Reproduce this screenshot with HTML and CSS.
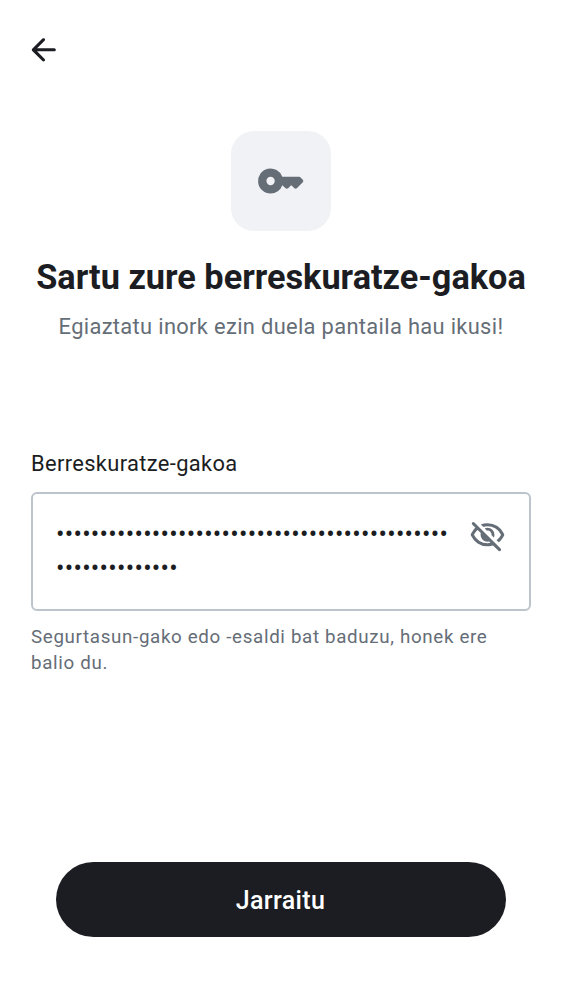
FILE: index.html
```html
<!DOCTYPE html>
<html lang="eu">
<head>
<meta charset="utf-8">
<title>Berreskuratze-gakoa</title>
<link rel="stylesheet" href="styles.css">
</head>
<body>
<main class="screen">
  <header class="topbar">
    <button class="back" aria-label="Atzera">
      <svg viewBox="0 -.2 24 24"><path d="m7.83 13 4.9 4.9a.95.95 0 0 1 .287.7.98.98 0 0 1-.313.7q-.3.275-.7.288a.93.93 0 0 1-.7-.288l-6.6-6.6a.9.9 0 0 1-.212-.325A1.1 1.1 0 0 1 4.426 12q0-.2.063-.375a.9.9 0 0 1 .212-.325l6.6-6.6a.93.93 0 0 1 .688-.275q.412 0 .712.275.3.3.3.713 0 .412-.3.712L7.826 11h11.175q.424 0 .713.287.287.288.287.713t-.287.713a.97.97 0 0 1-.713.287z"/></svg>
    </button>
  </header>
  <section class="intro">
    <div class="tile">
      <svg viewBox="0 0 24 24"><path fill-rule="evenodd" d="M7 14a2 2 0 1 1 0-4 2 2 0 0 1 0 4m0 4a6 6 0 1 1 5.65-8h8.05q.4 0 .7.3l1.05 1.05q.6.65 0 1.3l-2.75 2.75q-.7.6-1.4 0l-1.2-1.2q-.2-.2-.4 0l-1.15 1.15q-.65.6-1.35.15L12.65 14A6 6 0 0 1 7 18"/></svg>
    </div>
    <h1>Sartu zure berreskuratze-gakoa</h1>
    <p>Egiaztatu inork ezin duela pantaila hau ikusi!</p>
  </section>
  <section class="field">
    <label>Berreskuratze-gakoa</label>
    <div class="input">
      <div class="mask">•••••••••••••••••••••••••••••••••••••••••••••<br>••••••••••••••</div>
      <svg class="eye" viewBox="0 0 24 24"><path d="m16.1 13.3-1.45-1.45q.225-1.175-.675-2.2t-2.325-.8L10.2 7.4q.424-.2.862-.3.438-.1.938-.1 1.875 0 3.188 1.312Q16.5 9.625 16.5 11.5q0 .5-.1.938t-.3.862m3.2 3.15-1.45-1.4a11 11 0 0 0 1.688-1.588A9 9 0 0 0 20.8 11.5q-1.25-2.524-3.588-4.012T12 6q-.725 0-1.425.1a10 10 0 0 0-1.375.3L7.65 4.85A11.1 11.1 0 0 1 12 4q3.575 0 6.425 1.887T22.7 10.8q.1.15.125.313t.025.387-.038.387-.112.313a12.3 12.3 0 0 1-1.412 2.25A11 11 0 0 1 19.3 16.45m-.2 5.45-3.5-3.45q-.874.274-1.762.413Q12.95 19 12 19q-3.575 0-6.425-1.887T1.3 12.2a1.3 1.3 0 0 1-.125-.312 2 2 0 0 1 0-.763 1.3 1.3 0 0 1 .125-.3Q1.825 9.75 2.525 8.85A13 13 0 0 1 4.15 7L2.075 4.9a.93.93 0 0 1-.275-.688q0-.412.3-.712a.95.95 0 0 1 .7-.275q.425 0 .7.275l17 17q.275.275.288.688a.93.93 0 0 1-.288.712.95.95 0 0 1-.7.275.95.95 0 0 1-.7-.275M5.55 8.4q-.725.65-1.325 1.425T3.2 11.5q1.25 2.524 3.588 4.012T12 17q.5 0 .975-.062.475-.063.975-.138l-.9-.95q-.274.075-.525.113A3.5 3.5 0 0 1 12 16q-1.875 0-3.188-1.312Q7.5 13.375 7.5 11.5q0-.274.038-.525.037-.25.112-.525z"/></svg>
    </div>
    <p class="hint">Segurtasun-gako edo -esaldi bat baduzu, honek ere balio du.</p>
  </section>
  <footer class="actions"><button class="primary">Jarraitu</button></footer>
</main>
</body>
</html>
```
FILE: styles.css
```css
* { box-sizing: border-box; }
body { margin: 0; background: #fff; font-family: Roboto, sans-serif; color: #1b1d22; }
.screen { width: 562px; height: 1000px; padding: 31px 31px 63px; display: flex; flex-direction: column; overflow: hidden; }
.topbar { height: 100px; }
.back { display: block; width: 37px; height: 37px; margin-left: -6px; padding: 0; border: 0; background: none; }
.back svg { display: block; width: 37px; height: 37px; fill: #1b1d22; }
.intro { display: flex; flex-direction: column; align-items: center; height: 320px; }
.tile { width: 100px; height: 100px; border-radius: 23px; background: #f0f2f5; display: flex; align-items: center; justify-content: center; }
.tile svg { width: 50px; height: 50px; fill: #656d77; }
h1 { margin: 25px 0 0; font-size: 34.3px; line-height: 42px; font-weight: 700; white-space: nowrap; }
.intro p { margin: 16px 0 0; font-size: 21.87px; line-height: 26px; letter-spacing: .34px; color: #656d77; white-space: nowrap; }
.field { display: flex; flex-direction: column; }
.field label { font-size: 21.87px; line-height: 26px; letter-spacing: .36px; }
.input { margin-top: 15px; height: 119px; border: 2px solid #bdc4cc; border-radius: 6px; padding: 24px 23px 0 23px; display: flex; justify-content: space-between; }
.mask { font-size: 25px; line-height: 34px; white-space: nowrap; letter-spacing: .28px; }
.eye { width: 37px; height: 37px; margin-top: -1px; fill: #656d77; flex: none; }
.hint { margin: 13px 0 0; font-size: 18.75px; line-height: 26px; letter-spacing: .66px; color: #656d77; }
.actions { margin-top: auto; padding: 0 25px; }
.primary { display: block; width: 100%; height: 75px; padding: 2px 1px 0 0; border: 0; border-radius: 38px; background: #1b1d22; color: #fff; font: 500 25px/30px Roboto, sans-serif; letter-spacing: .35px; }
```
